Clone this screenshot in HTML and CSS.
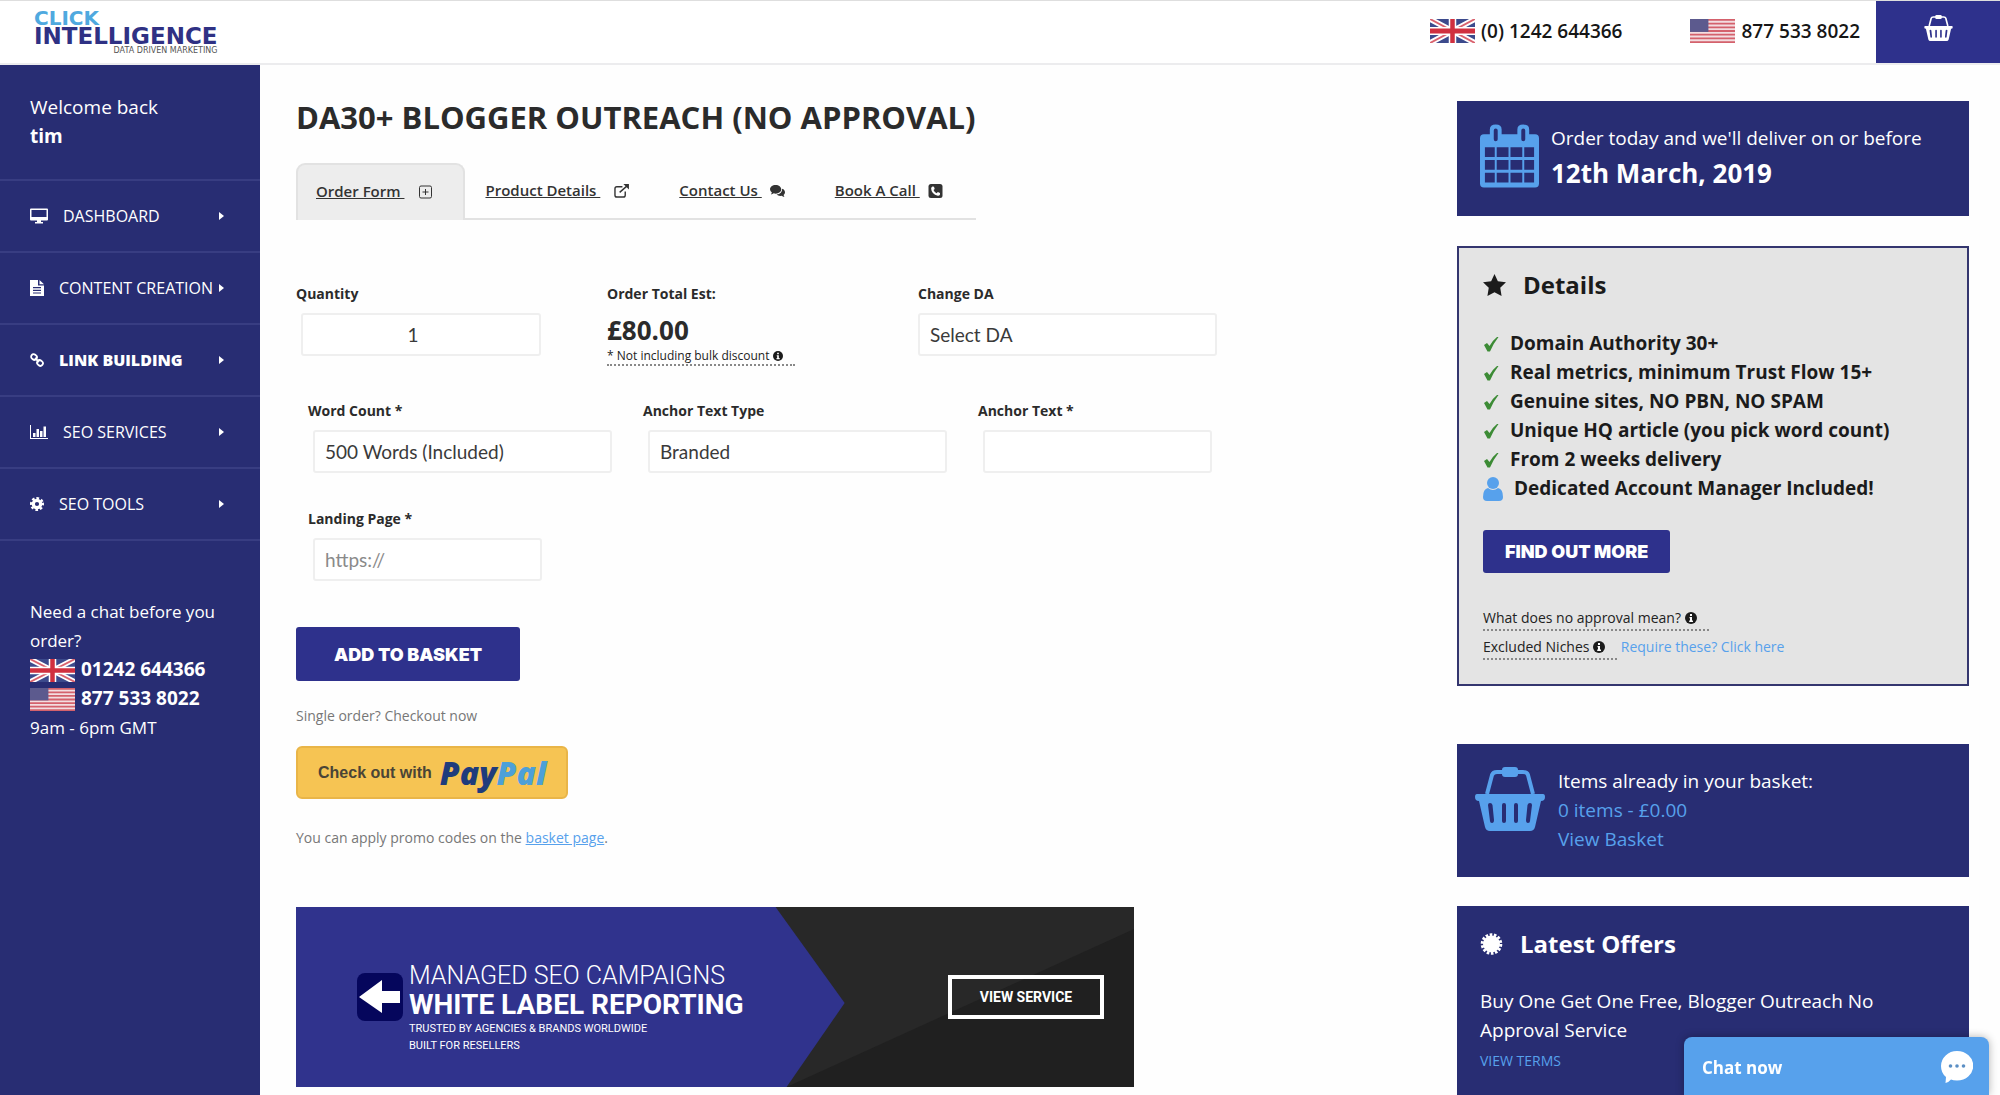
FILE: index.html
```html
<!DOCTYPE html>
<html lang="en">
<head>
    <meta charset="UTF-8">
    <meta name="viewport" content="width=device-width, initial-scale=1.0">
    <title>DA30+ Blogger Outreach</title>
    <link rel="stylesheet" href="styles.css">
</head>
<body>
    <!-- shared icons -->
    <svg class="sprite" aria-hidden="true">
        <symbol id="flag-uk" viewBox="0 0 60 30" preserveAspectRatio="none">
            <rect width="60" height="30" fill="#3c4a8c"/>
            <path d="M0 0L60 30M60 0L0 30" stroke="#fff" stroke-width="7"/>
            <path d="M0 0L60 30M60 0L0 30" stroke="#d9626e" stroke-width="2.5"/>
            <path d="M30 0V30M0 15H60" stroke="#fff" stroke-width="10"/>
            <path d="M30 0V30M0 15H60" stroke="#d0303f" stroke-width="6"/>
        </symbol>
        <symbol id="flag-us" viewBox="0 0 44 26" preserveAspectRatio="none">
            <rect width="44" height="26" fill="#f3dde0"/>
            <path d="M0 1H44M0 5H44M0 9H44M0 13H44M0 17H44M0 21H44M0 25H44" stroke="#d4616c" stroke-width="2"/>
            <rect width="18" height="14" fill="#5c5a8e"/>
        </symbol>
        <symbol id="basket" viewBox="0 0 70 64">
            <path d="M12 27L17 8Q18 5 22 5H48Q52 5 53 8L58 27" fill="none" stroke="currentColor" stroke-width="4"/>
            <rect x="27" y="0" width="16" height="10" rx="3" fill="currentColor"/>
            <path fill="currentColor" fill-rule="evenodd" d="M2 27H68Q70 27 70 30Q70 34 66 34L60 60Q59 64 55 64H15Q11 64 10 60L4 34Q0 34 0 30Q0 27 2 27ZM13 38Q13 36 15 36Q17 36 17.500 38L19 53Q19 56 17 56Q15 56 15 54ZM27 38Q27 36 29 36Q31 36 31 38V54Q31 56 29 56Q27 56 27 54ZM39 38Q39 36 41 36Q43 36 43 38V54Q43 56 41 56Q39 56 39 54ZM52.500 38Q53 36 55 36Q57 36 57 38L55 54Q55 56 53 56Q51 56 51 53Z"/>
        </symbol>
        <symbol id="info" viewBox="0 0 12 12">
            <circle cx="6" cy="6" r="6" fill="#1b1b1b"/>
            <path d="M5 2H7V4H5ZM4.500 5H7V8.500H8V10H4.200V8.500H5V6.300H4.500Z" fill="#fff"/>
        </symbol>
        <symbol id="check" viewBox="0 0 16 16">
            <path d="M1 9L4 7L6.500 10Q10 4 14 1H15.500Q10 8 7 15.500H4.500Z" fill="#3c8b35"/>
        </symbol>
        <symbol id="caret" viewBox="0 0 5 8">
            <path d="M0 0L5 4L0 8Z" fill="currentColor"/>
        </symbol>
    </svg>

    <header class="header">
        <a class="logo" href="#" aria-label="Click Intelligence">
            <span class="logo-top">CLICK</span>
            <span class="logo-main">INTELLIGENCE</span>
            <span class="logo-tag">DATA DRIVEN MARKETING</span>
        </a>
        <div class="phones">
            <span class="phone"><svg class="flag"><use href="#flag-uk"/></svg>(0) 1242 644366</span>
            <span class="phone"><svg class="flag"><use href="#flag-us"/></svg>877 533 8022</span>
        </div>
        <a class="header-basket" href="#" aria-label="Basket"><svg><use href="#basket"/></svg></a>
    </header>

    <div class="page">
        <aside class="sidebar">
            <div class="welcome">Welcome back<br><strong>tim</strong></div>
            <nav>
                <a class="nav-item" href="#">
                    <svg class="wide" viewBox="0 0 18 15" fill="currentColor"><path fill-rule="evenodd" d="M1 0H17Q18 0 18 1V11Q18 12 17 12H11V13.500H13V15H5V13.500H7V12H1Q0 12 0 11V1Q0 0 1 0ZM1.500 1.500V8.500H16.500V1.500Z"/></svg>
                    <span>DASHBOARD</span><svg class="caret"><use href="#caret"/></svg>
                </a>
                <a class="nav-item" href="#">
                    <svg viewBox="0 0 14 16" fill="currentColor"><path fill-rule="evenodd" d="M0 0H8V5.500H14V16H0ZM9.500 0L14 4.300H9.500ZM3 7V8.200H11V7ZM3 9.700V10.900H11V9.700ZM3 12.400V13.600H11V12.400Z"/></svg>
                    <span>CONTENT CREATION</span><svg class="caret"><use href="#caret"/></svg>
                </a>
                <a class="nav-item active" href="#">
                    <svg viewBox="0 0 14 14" fill="none" stroke="currentColor" stroke-width="1.800"><rect x="1" y="1.500" width="6" height="5" rx="2.500" transform="rotate(40 4 4)"/><rect x="7" y="7.500" width="6" height="5" rx="2.500" transform="rotate(40 10 10)"/><path d="M5 5L9 9"/></svg>
                    <span>LINK BUILDING</span><svg class="caret"><use href="#caret"/></svg>
                </a>
                <a class="nav-item" href="#">
                    <svg class="wide" viewBox="0 0 18 14" fill="currentColor"><path d="M0 0H1V13H18V14H0ZM3 8H5.500V12H3ZM6.500 4H9V12H6.500ZM10 6H12.500V12H10ZM13.500 1.500H16V12H13.500Z"/></svg>
                    <span>SEO SERVICES</span><svg class="caret"><use href="#caret"/></svg>
                </a>
                <a class="nav-item" href="#">
                    <svg viewBox="0 0 14 14"><circle cx="7" cy="7" r="3.700" fill="none" stroke="currentColor" stroke-width="3.200"/><circle cx="7" cy="7" r="5.900" fill="none" stroke="currentColor" stroke-width="2.200" stroke-dasharray="2.600 2.034" transform="rotate(-12 7 7)"/></svg>
                    <span>SEO TOOLS</span><svg class="caret"><use href="#caret"/></svg>
                </a>
            </nav>
            <div class="contact">
                Need a chat before you order?<br>
                <svg class="flag"><use href="#flag-uk"/></svg><strong>01242 644366</strong><br>
                <svg class="flag"><use href="#flag-us"/></svg><strong>877 533 8022</strong><br>
                9am - 6pm GMT
            </div>
        </aside>

        <main class="main">
            <h1>DA30+ BLOGGER OUTREACH (NO APPROVAL)</h1>
            <div class="tabs">
                <a class="tab active" href="#"><u>Order Form&nbsp;</u>
                    <svg viewBox="0 0 14 14" fill="none" stroke="currentColor"><rect x="1" y="1" width="12" height="12" rx="1.500"/><path d="M7 4V10M4 7H10"/></svg></a>
                <a class="tab" href="#"><u>Product Details&nbsp;</u>
                    <svg viewBox="0 0 16 15" fill="none" stroke="currentColor" stroke-width="1.500"><path d="M9 3H3Q1 3 1 5V12Q1 14 3 14H10Q12 14 12 12V8M6 9L14 2"/><path d="M10 0H16V6Z" fill="currentColor" stroke="none"/></svg></a>
                <a class="tab tab-near" href="#"><u>Contact Us&nbsp;</u>
                    <svg viewBox="0 0 16 13" fill="currentColor"><path d="M6 0C9.500 0 12 2 12 4.700S9.500 9.300 6 9.300Q5 9.300 4 9Q2.500 10.200 1 10.200L2 8Q0 6.600 0 4.700C0 2 2.500 0 6 0Z"/><path d="M13 4Q16 5 16 8Q16 9.500 14.500 10.700L15.300 13Q13.500 12.500 12.500 11.600Q9 12.200 7 10.300Q13 9.500 13 4Z"/></svg></a>
                <a class="tab tab-near" href="#"><u>Book A Call&nbsp;</u>
                    <svg viewBox="0 0 14 14"><rect width="14" height="14" rx="2.500" fill="currentColor"/><path d="M4 2.500L5.500 2.700L6.200 5L5 6Q6 8.200 8.200 9.300L9.300 8L11.500 9V10.500Q11 11.800 9.300 11.700Q3 10.300 2.600 4.600Q2.800 3.200 4 2.500Z" fill="#fff"/></svg></a>
            </div>

            <form>
                <div class="row summary">
                    <div class="field">
                        <label for="quantity">Quantity</label>
                        <input class="quantity" type="text" inputmode="numeric" id="quantity" value="1">
                    </div>
                    <div class="field">
                        <span class="label">Order Total Est:</span>
                        <strong class="total">£80.00</strong>
                        <span class="hint hint-small">* Not including bulk discount <svg class="info"><use href="#info"/></svg></span>
                    </div>
                    <div class="field">
                        <label for="da">Change DA</label>
                        <select id="da"><option>Select DA</option></select>
                    </div>
                </div>
                <div class="row options">
                    <div class="field">
                        <label for="words">Word Count *</label>
                        <select id="words"><option>500 Words (Included)</option></select>
                    </div>
                    <div class="field">
                        <label for="anchor-type">Anchor Text Type</label>
                        <select id="anchor-type"><option>Branded</option></select>
                    </div>
                    <div class="field">
                        <label for="anchor">Anchor Text *</label>
                        <input type="text" id="anchor">
                    </div>
                    <div class="field">
                        <label for="landing">Landing Page *</label>
                        <input type="text" id="landing" placeholder="https://">
                    </div>
                </div>
                <button class="button add" type="button">ADD TO BASKET</button>
                <p class="note">Single order? Checkout now</p>
                <button class="paypal" type="button">Check out with <span class="paypal-logo">Pay<span>Pal</span></span></button>
                <p class="note promo">You can apply promo codes on the <a href="#">basket page</a>.</p>
            </form>

            <section class="banner">
                <svg class="banner-bg" viewBox="0 0 837 180" preserveAspectRatio="none" aria-hidden="true">
                    <rect width="837" height="180" fill="#282828"/>
                    <path d="M490 180L837 22V180Z" fill="#202020"/>
                    <path d="M0 0H479L548 96L490 180H0Z" fill="#30338d"/>
                </svg>
                <svg class="banner-arrow" viewBox="0 0 46 48"><rect width="46" height="48" rx="8" fill="#05065c"/><path d="M2 24L25 7V18H43V30H25V40Z" fill="#fff"/></svg>
                <div class="banner-text">
                    <div class="banner-light">MANAGED SEO CAMPAIGNS</div>
                    <div class="banner-bold">WHITE LABEL REPORTING</div>
                    <div class="banner-small">TRUSTED BY AGENCIES &amp; BRANDS WORLDWIDE<br>BUILT FOR RESELLERS</div>
                </div>
                <button class="banner-button" type="button">VIEW SERVICE</button>
            </section>
        </main>

        <aside class="side">
            <section class="card delivery">
                <svg class="calendar" viewBox="0 0 60 64"><path fill="#57a1ec" fill-rule="evenodd" d="M4 10H10V5Q10 0 16 0Q22 0 22 5V10H38V5Q38 0 44 0Q50 0 50 5V10H56Q60 10 60 14V60Q60 64 56 64H4Q0 64 0 60V14Q0 10 4 10ZM14 6V15Q14 17 16 17Q18 17 18 15V6Q18 4 16 4Q14 4 14 6ZM42 6V15Q42 17 44 17Q46 17 46 15V6Q46 4 44 4Q42 4 42 6ZM5 23V33H15V23ZM17 23V33H29V23ZM31 23V33H43V23ZM45 23V33H55V23ZM5 36V46H15V36ZM17 36V46H29V36ZM31 36V46H43V36ZM45 36V46H55V36ZM5 49V59H15V49ZM17 49V59H29V49ZM31 49V59H43V49ZM45 49V59H55V49Z"/></svg>
                <div>
                    <div>Order today and we'll deliver on or before</div>
                    <strong class="date">12th March, 2019</strong>
                </div>
            </section>

            <section class="card details">
                <h2><svg viewBox="0 0 24 23"><path d="M12 0L15.500 7.500L24 8.700L18 14.500L19.400 23L12 19L4.600 23L6 14.500L0 8.700L8.500 7.500Z" fill="currentColor"/></svg>Details</h2>
                <ul>
                    <li><svg><use href="#check"/></svg>Domain Authority 30+</li>
                    <li><svg><use href="#check"/></svg>Real metrics, minimum Trust Flow 15+</li>
                    <li><svg><use href="#check"/></svg>Genuine sites, NO PBN, NO SPAM</li>
                    <li><svg><use href="#check"/></svg>Unique HQ article (you pick word count)</li>
                    <li><svg><use href="#check"/></svg>From 2 weeks delivery</li>
                    <li><svg class="user" viewBox="0 0 20 24" fill="#57a1ec"><circle cx="10" cy="6" r="6"/><path d="M5 11Q10 15 15 11Q20 12 20 20Q20 24 16 24H4Q0 24 0 20Q0 12 5 11Z"/></svg>Dedicated Account Manager Included!</li>
                </ul>
                <button class="button more" type="button">FIND OUT MORE</button>
                <div class="hints">
                    <div><span class="hint">What does no approval mean? <svg class="info"><use href="#info"/></svg></span></div>
                    <div><span class="hint">Excluded Niches <svg class="info"><use href="#info"/></svg></span> <a href="#">Require these? Click here</a></div>
                </div>
            </section>

            <section class="card basket">
                <svg><use href="#basket"/></svg>
                <div>Items already in your basket:<br><a href="#">0 items - £0.00</a><br><a href="#">View Basket</a></div>
            </section>

            <section class="card offers">
                <h2><svg viewBox="0 0 22 22"><circle cx="11" cy="11" r="8.500" fill="currentColor"/><circle cx="11" cy="11" r="9.300" fill="none" stroke="currentColor" stroke-width="3" stroke-dasharray="2.600 1.574"/></svg>Latest Offers</h2>
                <p>Buy One Get One Free, Blogger Outreach No Approval Service</p>
                <a class="terms" href="#">VIEW TERMS</a>
            </section>
        </aside>
    </div>

    <button class="chat" type="button">Chat now
        <svg viewBox="0 0 32 32"><path d="M16 0A16 14.500 0 0 1 16 29.500Q12 29.500 10 28.500Q8 31 4.500 32L5 26Q0 22 0 15A16 15 0 0 1 16 0Z" fill="#fff"/><g fill="#5b8fc4"><circle cx="9.500" cy="15" r="1.800"/><circle cx="16" cy="15" r="1.800"/><circle cx="22.500" cy="15" r="1.800"/></g></svg>
    </button>
</body>
</html>
```

FILE: styles.css
```css
* {
    box-sizing: border-box;
}
body {
    margin: 0;
    height: 100vh;
    overflow: hidden;
    display: flex;
    flex-direction: column;
    background: #fefefe;
    color: #2b2b2b;
    font-family: "Open Sans", sans-serif;
    font-size: 19px;
    line-height: 29px;
}
a {
    color: #57a1ec;
    text-decoration: none;
}
h1, h2, p, ul {
    margin: 0;
    padding: 0;
}
button, input, select {
    font-family: inherit;
}
button {
    cursor: pointer;
}
.sprite {
    position: absolute;
    width: 0;
    height: 0;
}

/* header */
.header {
    display: flex;
    align-items: center;
    flex-shrink: 0;
    height: 65px;
    padding-left: 34px;
    border-top: 1px solid #dedede;
    border-bottom: 2px solid #ececee;
    background: #fff;
}
.logo {
    display: flex;
    flex-direction: column;
    font-family: "DejaVu Sans", sans-serif;
    font-weight: bold;
}
.logo-top {
    color: #4fa9df;
    font-size: 20px;
    line-height: 17px;
}
.logo-main {
    color: #2f3184;
    font-size: 23px;
    line-height: 19px;
}
.logo-tag {
    align-self: flex-end;
    color: #555;
    font-size: 8px;
    line-height: 9px;
    font-weight: normal;
}
.phones {
    display: flex;
    gap: 68px;
    margin-left: auto;
    margin-right: 16px;
    padding-bottom: 2px;
}
.phone {
    display: flex;
    align-items: center;
    color: #161616;
    font-size: 19px;
    font-weight: 600;
}
.flag {
    width: 45px;
    height: 24px;
    margin-right: 6px;
}
.header-basket {
    display: flex;
    align-items: center;
    justify-content: center;
    align-self: stretch;
    width: 124px;
    padding-bottom: 8px;
    background: #2e318c;
    color: #fff;
}
.header-basket svg {
    width: 29px;
    height: 26px;
}

.page {
    display: grid;
    grid-template-columns: 260px 1fr 512px;
    flex: 1;
    min-height: 0;
}

/* sidebar */
.sidebar {
    background: #282d73;
    color: #fff;
    font-size: 17px;
}
.welcome {
    height: 114px;
    padding: 28px 30px;
    font-size: 19px;
}
.nav-item {
    display: flex;
    align-items: center;
    height: 72px;
    padding: 0 36px 0 30px;
    border-top: 2px solid #383d82;
    color: #fff;
    font-size: 16px;
}
.nav-item:last-child {
    height: 74px;
    border-bottom: 2px solid #383d82;
}
.nav-item.active {
    font-weight: 800;
}
.nav-item svg {
    width: 14px;
    height: 16px;
    margin-right: 15px;
}
.nav-item svg.wide {
    width: 18px;
}
.nav-item svg.caret {
    width: 5px;
    height: 8px;
    margin: 0 0 0 auto;
}
.contact {
    padding: 56px 30px 0;
}
.contact strong {
    font-size: 19px;
    line-height: 28px;
}
.contact .flag {
    height: 23px;
    vertical-align: -6px;
}

/* order form */
.main {
    padding: 32px 30px 0 36px;
}
h1 {
    font-size: 31px;
    line-height: 40px;
    font-weight: 700;
}
.tabs {
    display: flex;
    width: 680px;
    height: 57px;
    margin-top: 26px;
    border-bottom: 2px solid #e2e2e2;
}
.tab {
    display: flex;
    align-items: center;
    gap: 14px;
    height: 57px;
    padding: 0 30px 2px 20px;
    color: #333;
    font-size: 15px;
    font-weight: 600;
    white-space: nowrap;
}
.tab-near {
    gap: 8px;
}
.tab.active {
    border: 2px solid #e2e2e2;
    border-bottom: 0;
    border-radius: 9px 9px 0 0;
    background: #ededed;
    padding-left: 18px;
}
.tab svg {
    width: 15px;
    height: 14px;
}
.row {
    display: grid;
    row-gap: 36px;
}
.summary {
    grid-template-columns: 311px 311px 299px;
    margin-top: 64px;
}
.options {
    grid-template-columns: repeat(3, 335px);
    margin-top: 35px;
    padding-left: 12px;
}
.field {
    display: flex;
    flex-direction: column;
    align-items: flex-start;
}
.field label,
.label {
    margin-bottom: 9px;
    font-size: 14px;
    line-height: 20px;
    font-weight: 700;
}
.field input,
.field select {
    width: 299px;
    height: 43px;
    padding: 0 10px;
    border: 2px solid #efefef;
    border-radius: 3px;
    background: #fff;
    color: #3a3a3a;
    font-family: Lato, sans-serif;
    font-size: 19px;
    appearance: none;
}
.field input {
    width: 229px;
}
.options input,
.options select {
    margin-left: 5px;
}
.field input.quantity {
    width: 240px;
    margin-left: 5px;
    padding-right: 26px;
    text-align: center;
}
.field input::placeholder {
    color: #8a8a8a;
}
.total {
    font-size: 26px;
    line-height: 35px;
}
.hint {
    display: inline-block;
    padding-right: 12px;
    border-bottom: 2px dotted #888;
    color: #222;
    font-size: 14px;
    line-height: 22px;
}
.hint-small {
    font-size: 12px;
    line-height: 16px;
}
.info {
    width: 12px;
    height: 12px;
    vertical-align: -1px;
}
.hint-small .info {
    width: 10px;
    height: 10px;
}
.button {
    display: block;
    border: 0;
    border-radius: 3px;
    background: #2e318c;
    color: #fff;
    font-family: Inter, sans-serif;
    font-size: 18px;
    font-weight: 900;
}
.add {
    height: 54px;
    margin-top: 46px;
    padding: 0 38px;
}
.note {
    margin-top: 25px;
    color: #777;
    font-size: 14px;
    line-height: 20px;
}
.note a {
    text-decoration: underline;
}
.paypal {
    display: flex;
    align-items: center;
    gap: 8px;
    height: 53px;
    margin-top: 20px;
    padding: 0 20px;
    border: 2px solid #e9b548;
    border-radius: 6px;
    background: #f6c453;
    color: #4a4436;
    font-family: "Liberation Sans", sans-serif;
    font-size: 16px;
    font-weight: bold;
}
.paypal-logo {
    color: #1f3c7c;
    font-family: "Open Sans", sans-serif;
    font-size: 32px;
    line-height: 40px;
    font-style: italic;
    font-weight: 800;
}
.paypal-logo span {
    color: #4da0d8;
}
.promo {
    margin-top: 29px;
}
.banner {
    position: relative;
    display: flex;
    align-items: center;
    max-width: 838px;
    height: 180px;
    margin-top: 59px;
    padding: 0 30px 0 61px;
    color: #fff;
    font-family: Roboto, sans-serif;
}
.banner-bg {
    position: absolute;
    inset: 0;
    width: 100%;
    height: 100%;
    z-index: -1;
}
.banner-arrow {
    width: 46px;
    height: 48px;
    margin-right: 6px;
}
.banner-text {
    padding-top: 22px;
}
.banner-light {
    font-size: 25px;
    line-height: 28px;
    font-weight: 300;
}
.banner-bold {
    font-size: 28px;
    line-height: 30px;
    font-weight: 700;
}
.banner-small {
    font-size: 11px;
    line-height: 17px;
}
.banner-button {
    width: 156px;
    height: 44px;
    margin-left: auto;
    border: 4px solid #fff;
    background: transparent;
    color: #fff;
    font-size: 14px;
    font-weight: 700;
}

/* right column */
.side {
    padding-top: 36px;
    margin-left: -31px;
    margin-right: 31px;
}
.card {
    background: #282d73;
    color: #fff;
}
.card h2 {
    display: flex;
    align-items: center;
    gap: 17px;
    font-size: 24px;
    line-height: 32px;
    font-weight: 700;
}
.card h2 svg {
    width: 23px;
    height: 22px;
}
.delivery {
    display: flex;
    gap: 12px;
    height: 115px;
    padding: 23px;
}
.calendar {
    width: 59px;
    height: 64px;
}
.date {
    font-size: 26px;
    line-height: 40px;
}
.details {
    height: 440px;
    margin-top: 30px;
    padding: 21px 24px;
    border: 2px solid #34366f;
    background: #e4e4e4;
    color: #1b1b1b;
}
.details ul {
    margin: 28px 0 27px;
    list-style: none;
    font-weight: 700;
}
.details li {
    display: flex;
    align-items: center;
}
.details li svg {
    width: 16px;
    height: 16px;
    margin-right: 11px;
}
.details li svg.user {
    width: 20px;
    height: 24px;
}
.more {
    height: 43px;
    padding: 0 22px;
}
.hints {
    margin-top: 30px;
    font-size: 14px;
}
.basket {
    display: flex;
    gap: 13px;
    height: 133px;
    margin-top: 58px;
    padding: 23px 18px;
}
.basket svg {
    width: 70px;
    height: 64px;
    color: #57a1ec;
}
.offers {
    height: 240px;
    margin-top: 29px;
    padding: 22px 23px;
}
.offers p {
    margin-top: 27px;
}
.terms {
    font-size: 14px;
}
.chat {
    position: fixed;
    right: 11px;
    bottom: 0;
    display: flex;
    align-items: center;
    justify-content: space-between;
    width: 305px;
    height: 58px;
    padding: 2px 16px 0 18px;
    border: 0;
    border-radius: 8px 8px 0 0;
    background: #57a1ec;
    box-shadow: 0 0 8px rgba(0, 0, 0, 0.3);
    color: #fff;
    font-size: 17px;
    font-weight: 700;
}
.chat svg {
    width: 32px;
    height: 32px;
}
```
